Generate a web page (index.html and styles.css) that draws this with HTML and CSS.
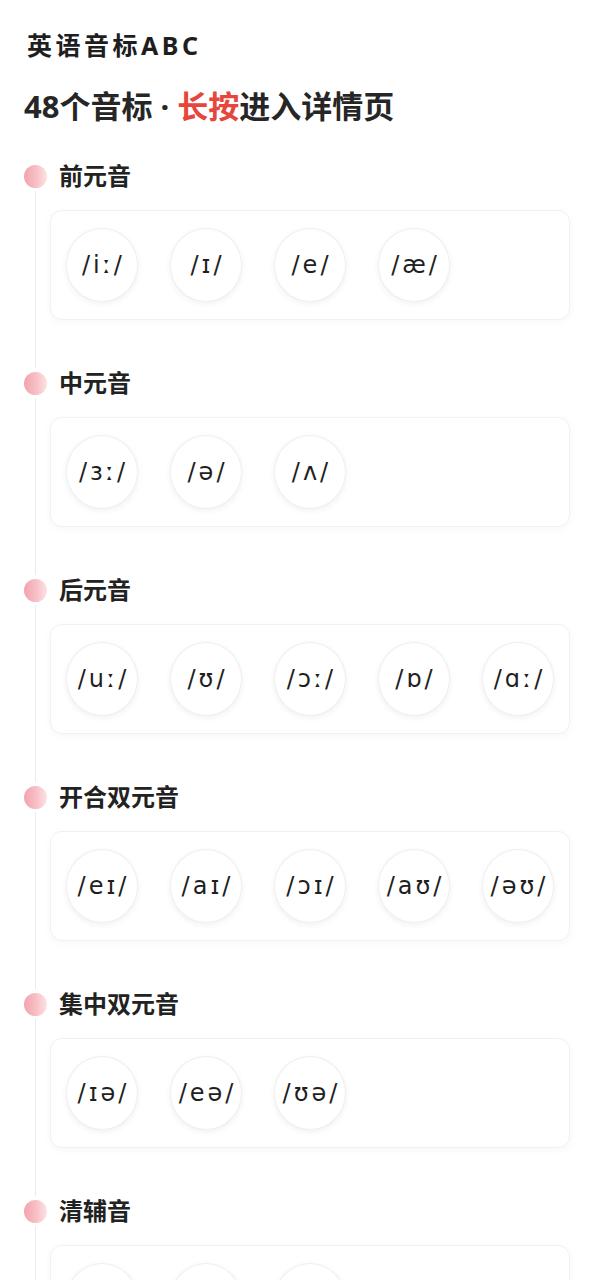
FILE: index.html
```html
<!DOCTYPE html>
<html lang="zh">
<head>
<meta charset="utf-8">
<title>英语音标ABC</title>
<link rel="stylesheet" href="styles.css">
</head>
<body>
<div class="page">
  <h1 class="app-title">英语音标ABC</h1>
  <h2 class="subtitle">48个音标 · <span class="accent">长按</span>进入详情页</h2>

  <section class="group">
    <div class="group-head"><span class="dot"></span><span class="group-name">前元音</span></div>
    <div class="group-body">
      <div class="card">
        <div class="ph">/iː/</div><div class="ph">/ɪ/</div><div class="ph">/e/</div><div class="ph">/æ/</div>
      </div>
    </div>
  </section>

  <section class="group">
    <div class="group-head"><span class="dot"></span><span class="group-name">中元音</span></div>
    <div class="group-body">
      <div class="card">
        <div class="ph">/ɜː/</div><div class="ph">/ə/</div><div class="ph">/ʌ/</div>
      </div>
    </div>
  </section>

  <section class="group">
    <div class="group-head"><span class="dot"></span><span class="group-name">后元音</span></div>
    <div class="group-body">
      <div class="card">
        <div class="ph">/uː/</div><div class="ph">/ʊ/</div><div class="ph">/ɔː/</div><div class="ph">/ɒ/</div><div class="ph">/ɑː/</div>
      </div>
    </div>
  </section>

  <section class="group">
    <div class="group-head"><span class="dot"></span><span class="group-name">开合双元音</span></div>
    <div class="group-body">
      <div class="card">
        <div class="ph">/eɪ/</div><div class="ph">/aɪ/</div><div class="ph">/ɔɪ/</div><div class="ph">/aʊ/</div><div class="ph">/əʊ/</div>
      </div>
    </div>
  </section>

  <section class="group">
    <div class="group-head"><span class="dot"></span><span class="group-name">集中双元音</span></div>
    <div class="group-body">
      <div class="card">
        <div class="ph">/ɪə/</div><div class="ph">/eə/</div><div class="ph">/ʊə/</div>
      </div>
    </div>
  </section>

  <section class="group">
    <div class="group-head"><span class="dot"></span><span class="group-name">清辅音</span></div>
    <div class="group-body">
      <div class="card">
        <div class="ph">/p/</div><div class="ph">/t/</div><div class="ph">/k/</div>
      </div>
    </div>
  </section>
</div>
</body>
</html>
```
FILE: styles.css
```css
html, body {
  margin: 0;
  padding: 0;
  background: #ffffff;
}
body {
  font-family: "Noto Sans", "Noto Sans CJK SC", sans-serif;
  color: #222222;
}
.page {
  padding: 29px 24px 40px 24px;
}
.app-title {
  margin: 0 0 0 3px;
  font-size: 25px;
  line-height: 32px;
  font-weight: 700;
  letter-spacing: 3.5px;
  color: #1e1e1e;
}
.subtitle {
  margin: 25px 0 0 0;
  font-size: 31px;
  line-height: 40px;
  font-weight: 700;
  color: #262626;
}
.accent {
  color: #e6463b;
}
.group:first-of-type {
  margin-top: 35px;
}
.group-head {
  display: flex;
  align-items: center;
  gap: 12px;
  height: 30px;
}
.dot {
  width: 23px;
  height: 23px;
  border-radius: 50%;
  background: linear-gradient(90deg, #f3a2ad 0%, #f8c4ca 60%, #fde3e6 100%);
  flex: none;
}
.group-name {
  font-size: 24px;
  line-height: 30px;
  font-weight: 700;
  color: #222222;
}
.group-body {
  margin-left: 11px;
  border-left: 1px solid #ebebeb;
  padding: 19px 0 48px 14px;
}
.card {
  display: flex;
  flex-wrap: wrap;
  gap: 18px 32px;
  padding: 17px 15px;
  border: 1px solid #f1f1f1;
  border-radius: 12px;
  background: #ffffff;
  box-shadow: 0 2px 8px rgba(0, 0, 0, 0.035);
  min-height: 74px;
}
.ph {
  width: 72px;
  height: 74px;
  box-sizing: border-box;
  border-radius: 50%;
  border: 1px solid #efefef;
  box-shadow: 0 2px 6px rgba(0, 0, 0, 0.06);
  background: #ffffff;
  display: flex;
  align-items: center;
  justify-content: center;
  font-family: "DejaVu Sans", "Noto Sans", sans-serif;
  font-size: 24px;
  letter-spacing: 3px;
  color: #1f1f1f;
  padding-left: 3px;
}
```
